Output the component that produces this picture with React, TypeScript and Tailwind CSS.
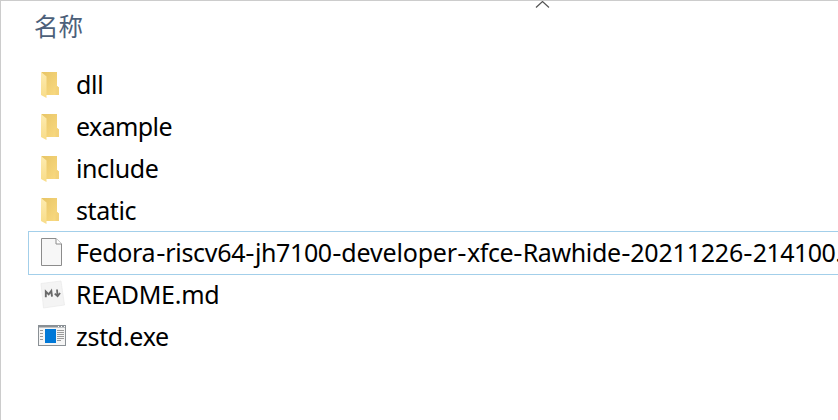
import type { ReactNode } from "react";

function FolderIcon() {
  return (
    <svg width="28" height="28" viewBox="0 0 28 28">
      <defs>
        <linearGradient id="back" x1="0" y1="0" x2="1" y2="1">
          <stop offset="0" stopColor="#e8c566" />
          <stop offset="1" stopColor="#fadb83" />
        </linearGradient>
        <linearGradient id="flap" x1="0" y1="0" x2="0" y2="1">
          <stop offset="0" stopColor="#fdebb0" />
          <stop offset="1" stopColor="#f8dc88" />
        </linearGradient>
      </defs>
      <path d="M4.5 2H20V16L22 17.5V25H4.5Z" fill="url(#back)" />
      <path d="M20 16L22 17.5V25H18.5V18Z" fill="#f3d27a" />
      <path d="M4 2L9.5 6.5V28L4 25Z" fill="url(#flap)" />
    </svg>
  );
}

function FileIcon() {
  return (
    <svg width="28" height="30" viewBox="0 0 28 30">
      <path d="M4.5 1.5H19L24.5 7V28.5H4.5Z" fill="#f7f7f7" stroke="#8c8c8c" />
      <path d="M19 1.5V7H24.5" fill="#fff" stroke="#8c8c8c" />
    </svg>
  );
}

function MarkdownIcon() {
  return (
    <svg width="28" height="30" viewBox="0 0 28 30">
      <path d="M4 4.5L24 2L27.5 26L6.5 29Z" fill="#f4f4f4" stroke="#eaeaea" strokeWidth=".7" />
      <path d="M8.8 18.3V12.5L11.7 15.4L14.3 12L15 17.6" fill="none" stroke="#6a6a6a" strokeWidth="1.9" />
      <path d="M20 10.5L20.5 16.5M17.7 14.6L20.6 17.1L23.1 14" fill="none" stroke="#6a6a6a" strokeWidth="1.8" />
    </svg>
  );
}

function ProgramIcon() {
  return (
    <svg className="ml-px shrink-0" width="28" height="22" viewBox="0 0 28 22">
      <rect x=".5" y=".5" width="27" height="20" fill="#f5f5f5" stroke="#8a9095" />
      <path d="M0 1.5H28" stroke="#8a9095" strokeWidth="2" />
      <path d="M20 1.5H21M23 1.5H24M26 1.5H27" stroke="#fff" />
      <rect x="7" y="4" width="11" height="14" fill="#0078d7" />
      <path d="M2 5.5H5M2 8.5H5M2 11.5H5M2 14.5H5M19 5.5H26M19 7.5H26M19 9.5H26M19 11.5H26M19 13.5H26M19 15.5H23" stroke="#9a9a9a" />
    </svg>
  );
}

function Hyphen() {
  return <span className="inline-flex w-[9.6px] scale-x-[1.15] justify-center">-</span>;
}

function Row({ icon, selected, children }: { icon: ReactNode; selected?: boolean; children: ReactNode }) {
  return (
    <div
      className={
        "flex h-[42px] items-center whitespace-nowrap pb-0.5 " +
        (selected ? "outline outline-1 outline-[#a3cfea]" : "")
      }
    >
      <div className="ml-2 flex w-7 shrink-0 items-center justify-center">{icon}</div>
      <span className="ml-[11px] text-[25px] leading-[40px] text-black">{children}</span>
    </div>
  );
}

export default function App() {
  return (
    <div className="h-[420px] w-[838px] overflow-hidden border-l border-t border-[#cccccc] bg-white font-['Noto_Sans','Noto_Sans_CJK_SC',sans-serif]">
      <header className="relative flex h-[63px] pl-[33px] pt-[7px]">
        <span className="font-['Noto_Sans_CJK_SC',sans-serif] text-[24.5px] leading-[36px] text-[#4c607a]">名称</span>
        <svg className="absolute left-[534px] top-0" width="15" height="8" viewBox="0 0 15 8">
          <path d="M1 6.5L7.5 .5L14 6.5" fill="none" stroke="#555" strokeWidth="1.2" />
        </svg>
      </header>
      <main className="-mr-3 ml-[28px]">
        <Row icon={<FolderIcon />}><span className="tracking-[-0.3px]">dll</span></Row>
        <Row icon={<FolderIcon />}><span className="tracking-[-0.6px]">example</span></Row>
        <Row icon={<FolderIcon />}><span className="tracking-[-0.4px]">include</span></Row>
        <Row icon={<FolderIcon />}><span className="tracking-[-0.4px]">static</span></Row>
        <Row icon={<FileIcon />} selected>
          <span className="inline-flex">
            <span className="w-[79.6px] tracking-[-0.4px]">Fedora</span>
            <Hyphen />
            <span className="w-[80.1px] tracking-[-0.28px]">riscv64</span>
            <Hyphen />
            <span className="w-[76.9px] tracking-[-0.37px]">jh7100</span>
            <Hyphen />
            <span className="w-[116px] tracking-[-0.18px]">developer</span>
            <Hyphen />
            <span className="w-[46.1px] tracking-[-0.45px]">xfce</span>
            <Hyphen />
            <span className="w-[98px] tracking-[-0.37px]">Rawhide</span>
            <Hyphen />
            <span className="w-[112.8px] tracking-[-0.2px]">20211226</span>
            <Hyphen />
            <span className="tracking-[-0.55px]">214100.</span>
          </span>
        </Row>
        <Row icon={<MarkdownIcon />}><span className="tracking-[-0.25px]">README.md</span></Row>
        <Row icon={<ProgramIcon />}><span className="tracking-[-0.3px]">zstd.exe</span></Row>
      </main>
    </div>
  );
}
